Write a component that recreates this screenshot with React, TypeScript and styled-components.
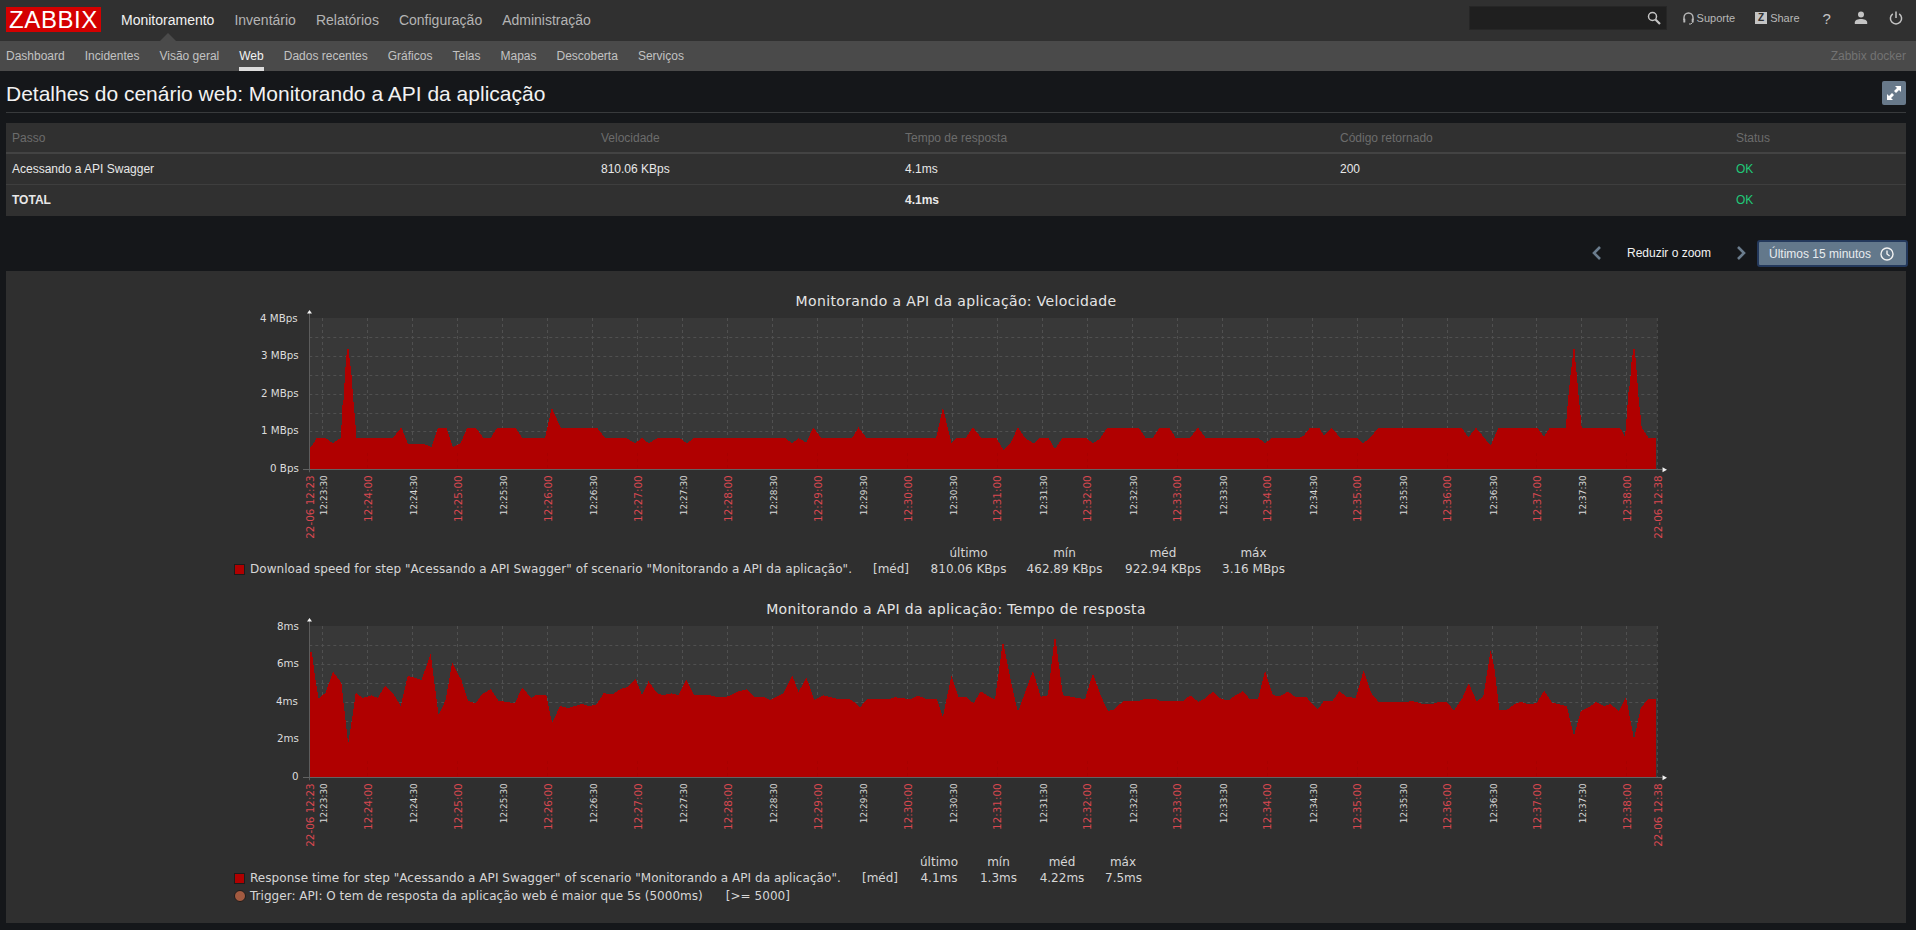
import React from "react";
import styled, { createGlobalStyle } from "styled-components";

const GlobalStyle = createGlobalStyle`
  * { box-sizing: border-box; }
  html, body { margin: 0; padding: 0; height: 100%; background: #15171a; overflow: hidden; }
  body { font-family: "Liberation Sans", Arial, sans-serif; font-size: 12px; color: #f2f2f2; }
`;

const Page = styled.div`
  width: 1916px;
  height: 930px;
`;

const TopBar = styled.header`
  height: 41px;
  background: #303030;
  display: flex;
  align-items: center;
  padding: 0 3px 0 6px;
`;

const Logo = styled.div`
  width: 95px;
  height: 25px;
  background: #d40000;
  color: #fff;
  font-size: 24px;
  line-height: 25px;
  letter-spacing: 0.6px;
  text-align: center;
  margin: 0 10px 2px 0;
`;

const MainNav = styled.nav`
  display: flex;
  flex: 1;
`;

const MainLink = styled.a<{ $active?: boolean }>`
  position: relative;
  padding: 0 10px;
  font-size: 14px;
  line-height: 41px;
  color: ${(p) => (p.$active ? "#f2f2f2" : "#b4b4b4")};
  ${(p) =>
    p.$active &&
    `&::after {
      content: "";
      position: absolute;
      left: 50%;
      bottom: 0;
      margin-left: -8px;
      border: 8px solid transparent;
      border-top: 0;
      border-bottom-color: #4a4a4a;
    }`}
`;

const Tools = styled.div`
  display: flex;
  align-items: center;
  height: 41px;
  padding-bottom: 5px;
`;

const SearchBox = styled.div`
  width: 198px;
  height: 24px;
  background: #1f1f1f;
  border: 1px solid #262626;
  margin-right: 16px;
  display: flex;
  align-items: center;
  justify-content: flex-end;
  padding-right: 5px;
  color: #c4c4c4;
`;

const ToolLink = styled.a<{ $after: number }>`
  display: flex;
  align-items: center;
  gap: 3px;
  font-size: 11px;
  color: #b8b8b8;
  margin-right: ${(p) => p.$after}px;
`;

const ZBadge = styled.span`
  width: 12px;
  height: 12px;
  background: #c4c4c4;
  color: #303030;
  font-size: 10px;
  font-weight: 700;
  line-height: 12px;
  text-align: center;
`;

const IconButton = styled.a`
  width: 34.5px;
  display: flex;
  justify-content: center;
  align-items: center;
  color: #c4c4c4;
  font-size: 15px;
`;

const SubBar = styled.nav`
  height: 30px;
  background: #4a4a4a;
  display: flex;
  padding: 0 10px 0 6px;
`;

const SubLink = styled.a<{ $active?: boolean }>`
  position: relative;
  margin-right: 20px;
  font-size: 12px;
  line-height: 30px;
  color: ${(p) => (p.$active ? "#f2f2f2" : "#c2c2c2")};
  ${(p) =>
    p.$active &&
    `&::after {
      content: "";
      position: absolute;
      left: 0;
      right: 0;
      bottom: 0;
      height: 4px;
      background: #dcdcdc;
    }`}
`;

const ServerName = styled.span`
  margin-left: auto;
  line-height: 30px;
  font-size: 12px;
  color: #737373;
`;

const Content = styled.main`
  padding: 0 10px 0 6px;
`;

const TitleRow = styled.div`
  height: 42px;
  display: flex;
  align-items: center;
  justify-content: space-between;
  border-bottom: 1px solid #383a3c;
  padding-top: 3px;
`;

const PageTitle = styled.h1`
  margin: 2px 0 0;
  font-size: 21px;
  font-weight: 400;
  line-height: 24px;
  color: #f2f2f2;
`;

const ExpandButton = styled.a`
  width: 24px;
  height: 24px;
  border-radius: 2px;
  background: #68798a;
  display: flex;
  align-items: center;
  justify-content: center;
`;

const Table = styled.section`
  margin-top: 10px;
  background: #303030;
`;

const TableRow = styled.div<{ $head?: boolean; $last?: boolean }>`
  display: grid;
  grid-template-columns: 589px 304px 435px 396px 176px;
  align-items: center;
  height: 31px;
  padding-bottom: ${(p) => (p.$last ? 2 : 0)}px;
  border-bottom: ${(p) => (p.$head ? "2px solid #434343" : p.$last ? "0" : "1px solid #3e3e3e")};
  color: ${(p) => (p.$head ? "#6c6c6c" : "#e8e8e8")};
  font-size: 12px;
`;

const Cell = styled.div<{ $ok?: boolean; $bold?: boolean }>`
  padding-left: 6px;
  color: ${(p) => (p.$ok ? "#20c978" : "inherit")};
  font-weight: ${(p) => (p.$bold ? 700 : 400)};
`;

const TimeBar = styled.div`
  height: 55px;
  padding-top: 24px;
  display: flex;
  align-items: flex-start;
  justify-content: flex-end;
  margin-right: -2px;
`;

const ZoomOut = styled.a`
  width: 84px;
  margin: 0 22px;
  line-height: 26px;
  color: #f2f2f2;
  white-space: nowrap;
`;

const Chevron = styled.a`
  height: 26px;
  width: 16px;
  display: flex;
  align-items: center;
  justify-content: center;
  color: #6b7d8e;
`;

const RangeButton = styled.a`
  width: 151px;
  height: 27px;
  margin-left: 8px;
  background: #63788b;
  border: 2px solid #24395c;
  border-radius: 3px;
  color: #e8ecef;
  display: flex;
  align-items: center;
  justify-content: space-between;
  padding: 0 12px 0 10px;
`;

const GraphPanel = styled.section`
  background: #2f2f2f;
  height: 652px;
  padding-top: 22px;
`;

const GraphTitle = styled.h2`
  margin: 0;
  height: 16px;
  line-height: 16px;
  font-family: "DejaVu Sans", sans-serif;
  font-size: 14px;
  font-weight: 400;
  letter-spacing: 0.36px;
  color: #e4e4e4;
  text-align: center;
`;

const PlotSvg = styled.svg`
  display: block;
`;

const AxisText = styled.text`
  font-family: "DejaVu Sans", sans-serif;
`;

const Legend = styled.div<{ $columns: string; $after: number }>`
  display: grid;
  grid-template-columns: ${(p) => p.$columns};
  margin: 0 0 ${(p) => p.$after}px 228px;
  font-family: "DejaVu Sans", sans-serif;
  font-size: 12px;
  line-height: 16px;
  color: #d6d6d6;
  white-space: nowrap;
`;

const StatHead = styled.span`
  text-align: center;
`;

const Spacer = styled.span`
  grid-column: span 3;
`;

const Stat = styled.span`
  text-align: center;
`;

const SeriesName = styled.span`
  letter-spacing: 0.055px;
`;

const Swatch = styled.span`
  align-self: center;
  width: 11px;
  height: 11px;
  background: #b00000;
  border: 1px solid #1c1c1c;
`;

const TriggerRow = styled.div`
  grid-column: 1 / -1;
  display: flex;
  align-items: center;
  height: 18px;
  padding-top: 1px;
  letter-spacing: 0.03px;
`;

const TriggerDot = styled.span`
  width: 12px;
  height: 12px;
  border-radius: 50%;
  background: #a25a40;
  border: 1px solid #1c1c1c;
  margin-right: 4px;
`;

const TriggerLimit = styled.span`
  margin-left: 23px;
`;

type P = [number, number];
const seg = (ox: number, sx: number, oy: number, pts: P[]): P[] =>
  pts.map(([x, y]) => [ox + x / sx, oy + y / 3] as P);

const speed: P[] = [
  ...seg(300, 2.8, 310, [
    [25, 478], [25, 415], [35, 405], [47, 384], [72, 384], [92, 400], [108, 388], [115, 384], [118, 290], [122, 270], [126, 190], [130, 140], [132, 118], [136, 118], [138, 140], [144, 190], [150, 280], [156, 350], [158, 384],
    [260, 384], [284, 352], [302, 402], [348, 402], [368, 412], [386, 353], [410, 353], [428, 412], [450, 400], [468, 353], [492, 353], [514, 384], [534, 384], [552, 353], [604, 353], [622, 384], [686, 384], [705, 293], [730, 353], [832, 353], [854, 384], [914, 384], [938, 400], [958, 384], [976, 400], [1002, 384], [1062, 384], [1084, 400], [1102, 384], [1358, 384], [1378, 400], [1396, 384], [1418, 398], [1437, 352], [1460, 384], [1546, 384], [1564, 352],
  ]),
  ...seg(860, 2.8, 310, [
    [0, 358], [18, 384], [213, 384], [232, 293], [256, 398], [272, 384], [296, 384], [316, 352], [340, 384], [382, 384], [402, 420], [422, 398], [442, 352], [462, 384], [486, 400], [504, 384], [528, 384], [546, 418], [566, 384], [634, 384], [652, 400], [670, 388], [692, 353], [780, 353], [800, 384], [820, 384], [838, 353], [866, 353], [884, 384], [924, 384], [946, 352], [968, 384], [1116, 384], [1134, 400], [1154, 384], [1232, 384],
  ]),
  ...seg(1300, 3, 280, [
    [0, 473], [12, 466], [30, 443], [58, 443], [72, 468], [95, 443], [120, 473], [170, 473], [190, 490], [212, 472], [235, 443], [485, 443], [505, 472], [528, 443], [572, 497], [595, 443], [712, 443], [732, 470], [750, 443], [797, 443], [800, 410], [805, 350], [812, 280], [817, 240], [820, 208], [824, 208], [826, 240], [830, 280], [836, 350], [842, 410], [845, 443], [960, 443], [975, 470], [980, 410], [985, 340], [990, 310], [995, 240], [1000, 208], [1004, 208], [1007, 240], [1012, 300], [1017, 370], [1022, 410], [1025, 443], [1045, 473], [1068, 473], [1068, 568],
  ]),
];

const response: P[] = [
  ...seg(300, 2.8, 620, [
    [25, 471], [25, 95], [33, 95], [42, 170], [52, 235], [72, 218], [92, 155], [116, 188], [122, 250], [135, 372], [150, 265], [156, 218], [176, 234], [200, 226], [218, 234], [238, 197], [262, 222], [282, 258], [302, 167], [340, 180], [350, 150], [366, 100], [374, 170], [388, 285], [408, 240], [426, 128], [452, 180], [470, 242], [492, 250], [510, 222], [534, 208], [556, 242], [602, 250], [622, 202], [648, 234], [660, 226], [690, 226], [706, 310], [728, 258], [750, 264], [790, 252], [810, 258], [830, 254], [850, 220], [876, 222], [900, 206], [916, 202], [940, 178], [958, 226], [976, 184], [1000, 220], [1016, 226], [1040, 220], [1060, 226], [1082, 178], [1104, 226], [1150, 226], [1170, 232], [1196, 230], [1228, 214], [1252, 208], [1274, 232], [1302, 232], [1316, 240], [1354, 220], [1378, 166], [1396, 216], [1418, 172], [1440, 240], [1464, 226], [1480, 230], [1510, 238], [1540, 238], [1556, 250],
  ]),
  ...seg(860, 2.8, 620, [
    [0, 262], [20, 238], [80, 238], [96, 232], [120, 234], [134, 238], [146, 236], [162, 226], [186, 238], [216, 238], [232, 292], [256, 166], [276, 232], [298, 232], [318, 250], [338, 214], [358, 228], [378, 238], [400, 64], [424, 190], [442, 276], [484, 152], [506, 230], [526, 226], [546, 44], [568, 226], [600, 232], [630, 238], [652, 160], [674, 226], [694, 274], [712, 268], [736, 244], [774, 244], [796, 238], [830, 238], [842, 244], [904, 244], [924, 226], [948, 246], [968, 234], [988, 214], [1012, 238], [1034, 240], [1050, 226], [1072, 214], [1092, 238], [1114, 238], [1134, 152], [1156, 226], [1178, 228], [1198, 214], [1220, 232], [1250, 232], [1282, 268], [1298, 244], [1322, 244], [1342, 214], [1362, 230], [1388, 234], [1410, 152], [1432, 220], [1452, 246], [1510, 246],
  ]),
  ...seg(1400, 3, 620, [
    [0, 246], [40, 244], [66, 251], [100, 251], [116, 246], [140, 245], [162, 272], [186, 236], [206, 190], [230, 244], [250, 230], [272, 90], [284, 150], [298, 270], [320, 270], [344, 252], [362, 246], [384, 252], [410, 250], [432, 212], [456, 248], [500, 258], [522, 348], [542, 274], [566, 262], [588, 246], [612, 258], [632, 252], [656, 274], [678, 232], [702, 358], [722, 264], [744, 238], [768, 238], [768, 471],
  ]),
];

const LEFT = 309.3;
const RIGHT = 1657.3;
const HEIGHT = 151.3;

const timeLabels = Array.from({ length: 30 }, (_, i) => {
  const seconds = 30 * (i + 1);
  const min = 23 + Math.floor(seconds / 60);
  const sec = seconds % 60;
  return { x: 322.3 + 44.97 * i, text: `12:${min}:${sec === 0 ? "00" : "30"}`, major: sec === 0 };
});

const RED = "#d9474f";

type PlotProps = {
  top: number;
  height: number;
  points: P[];
  yLabels: { text: string; y: number; x: number }[];
};

function Plot({ top, height, points, yLabels }: PlotProps) {
  const bottom = top + HEIGHT;
  const labelTop = bottom + 6;
  const poly = points.map(([x, y]) => `${x.toFixed(1)},${y.toFixed(1)}`).join(" ");
  return (
    <PlotSvg width={1900} height={height} viewBox={`6 ${top - 9} 1900 ${height}`}>
      <rect x={LEFT} y={top} width={RIGHT - LEFT} height={HEIGHT} fill="#383838" />
      {Array.from({ length: 7 }, (_, i) => {
        const y = Math.round(top + ((i + 1) * HEIGHT) / 8) + 0.5;
        return <line key={i} x1={LEFT} x2={RIGHT} y1={y} y2={y} stroke="#505050" strokeDasharray="3 3" />;
      })}
      {timeLabels.map((t) => (
        <line key={t.x} x1={Math.round(t.x) + 0.5} x2={Math.round(t.x) + 0.5} y1={top} y2={bottom} stroke="#505050" strokeDasharray="3 3" />
      ))}
      <line x1={RIGHT} x2={RIGHT} y1={top} y2={bottom} stroke="#505050" strokeDasharray="3 3" />
      <polygon points={poly} fill="#b00000" shapeRendering="crispEdges" />
      {timeLabels
        .filter((t) => t.major)
        .map((t) => (
          <line key={t.x} x1={Math.round(t.x) + 0.5} x2={Math.round(t.x) + 0.5} y1={top + 135} y2={bottom} stroke="#a80000" strokeDasharray="3 3" />
        ))}
      <line x1={309.5} x2={309.5} y1={top - 6} y2={bottom + 3} stroke="#5c5c5c" />
      <line x1={303} x2={1662} y1={Math.round(bottom) + 0.5} y2={Math.round(bottom) + 0.5} stroke="#626262" />
      <polygon points={`309.5,${top - 8} 312,${top - 4.5} 307,${top - 4.5}`} fill="#f2f2f2" />
      <polygon points={`1667,${bottom + 0.5} 1662.5,${bottom - 2} 1662.5,${bottom + 3}`} fill="#f2f2f2" />
      {yLabels.map((l) => (
        <AxisText key={l.text} x={l.x} y={l.y + 4} fontSize={10.3} fill="#dcdcdc">
          {l.text}
        </AxisText>
      ))}
      <AxisText transform={`translate(313.5 ${labelTop}) rotate(-90)`} textAnchor="end" fontSize={10.4} fill={RED}>
        22-06 12:23
      </AxisText>
      {timeLabels.map((t) =>
        t.major ? (
          <AxisText key={t.text} transform={`translate(${t.x + 4.6} ${labelTop}) rotate(-90)`} textAnchor="end" fontSize={10.4} fill={RED}>
            {t.text}
          </AxisText>
        ) : (
          <AxisText key={t.text} transform={`translate(${t.x + 5} ${labelTop}) rotate(-90)`} textAnchor="end" fontSize={8.9} fill="#d8d8d8">
            {t.text}
          </AxisText>
        )
      )}
      <AxisText transform={`translate(1661.5 ${labelTop}) rotate(-90)`} textAnchor="end" fontSize={10.4} fill={RED}>
        22-06 12:38
      </AxisText>
    </PlotSvg>
  );
}

const SearchIcon = () => (
  <svg width="14" height="14" viewBox="0 0 14 14" fill="none" stroke="currentColor" strokeWidth="1.5">
    <circle cx="5.5" cy="5.5" r="4" />
    <path d="M8.5 8.5 13 13" strokeWidth="2.2" />
  </svg>
);

const HeadsetIcon = () => (
  <svg width="11" height="13" viewBox="0 0 11 13" fill="none" stroke="currentColor" strokeWidth="1.4">
    <path d="M1 8V5.5a4.5 4.5 0 0 1 9 0V8" />
    <rect x="0.3" y="6.5" width="2" height="4" fill="currentColor" stroke="none" rx="0.6" />
    <rect x="8.7" y="6.5" width="2" height="4" fill="currentColor" stroke="none" rx="0.6" />
    <path d="M9.5 10.5 8 12H6" strokeWidth="1" />
  </svg>
);

const UserIcon = () => (
  <svg width="14" height="14" viewBox="0 0 14 14" fill="currentColor">
    <circle cx="7" cy="3.6" r="3" />
    <path d="M0.8 13v-1.6C0.8 9.2 4 8 7 8s6.2 1.2 6.2 3.4V13z" />
  </svg>
);

const PowerIcon = () => (
  <svg width="14" height="14" viewBox="0 0 14 14" fill="none" stroke="currentColor" strokeWidth="1.5">
    <path d="M7 0.6V7" />
    <path d="M3.8 2.8a5.6 5.6 0 1 0 6.4 0" />
  </svg>
);

const ExpandIcon = () => (
  <svg width="16" height="16" viewBox="0 0 16 16" fill="#fff">
    <path d="M9 1h6v6l-2-2-3 3-2-2 3-3z" />
    <path d="M7 15H1V9l2 2 3-3 2 2-3 3z" />
  </svg>
);

const ClockIcon = () => (
  <svg width="14" height="14" viewBox="0 0 14 14" fill="none" stroke="#f2f2f2" strokeWidth="1.4">
    <circle cx="7" cy="7" r="6" />
    <path d="M7 3.4V7l2.6 2" />
  </svg>
);

const ChevronIcon = ({ right }: { right?: boolean }) => (
  <svg width="10" height="14" viewBox="0 0 10 14" fill="none" stroke="currentColor" strokeWidth="2.6">
    <path d={right ? "M2 1l6 6-6 6" : "M8 1L2 7l6 6"} />
  </svg>
);

const mainItems = ["Inventário", "Relatórios", "Configuração", "Administração"];
const subItems = ["Dashboard", "Incidentes", "Visão geral", "Web", "Dados recentes", "Gráficos", "Telas", "Mapas", "Descoberta", "Serviços"];

export default function App() {
  return (
    <Page>
      <GlobalStyle />
      <TopBar>
        <Logo>ZABBIX</Logo>
        <MainNav>
          <MainLink $active>Monitoramento</MainLink>
          {mainItems.map((m) => (
            <MainLink key={m}>{m}</MainLink>
          ))}
        </MainNav>
        <Tools>
          <SearchBox>
            <SearchIcon />
          </SearchBox>
          <ToolLink $after={20}>
            <HeadsetIcon />
            Suporte
          </ToolLink>
          <ToolLink $after={10}>
            <ZBadge>Z</ZBadge>
            Share
          </ToolLink>
          <IconButton>?</IconButton>
          <IconButton>
            <UserIcon />
          </IconButton>
          <IconButton>
            <PowerIcon />
          </IconButton>
        </Tools>
      </TopBar>
      <SubBar>
        {subItems.map((s) => (
          <SubLink key={s} $active={s === "Web"}>
            {s}
          </SubLink>
        ))}
        <ServerName>Zabbix docker</ServerName>
      </SubBar>
      <Content>
        <TitleRow>
          <PageTitle>Detalhes do cenário web: Monitorando a API da aplicação</PageTitle>
          <ExpandButton>
            <ExpandIcon />
          </ExpandButton>
        </TitleRow>
        <Table>
          <TableRow $head>
            <Cell>Passo</Cell>
            <Cell>Velocidade</Cell>
            <Cell>Tempo de resposta</Cell>
            <Cell>Código retornado</Cell>
            <Cell>Status</Cell>
          </TableRow>
          <TableRow>
            <Cell>Acessando a API Swagger</Cell>
            <Cell>810.06 KBps</Cell>
            <Cell>4.1ms</Cell>
            <Cell>200</Cell>
            <Cell $ok>OK</Cell>
          </TableRow>
          <TableRow $last>
            <Cell $bold>TOTAL</Cell>
            <Cell />
            <Cell $bold>4.1ms</Cell>
            <Cell />
            <Cell $ok>OK</Cell>
          </TableRow>
        </Table>
        <TimeBar>
          <Chevron>
            <ChevronIcon />
          </Chevron>
          <ZoomOut>Reduzir o zoom</ZoomOut>
          <Chevron>
            <ChevronIcon right />
          </Chevron>
          <RangeButton>
            Últimos 15 minutos
            <ClockIcon />
          </RangeButton>
        </TimeBar>
        <GraphPanel>
          <GraphTitle>Monitorando a API da aplicação: Velocidade</GraphTitle>
          <Plot
            top={318}
            height={236}
            points={speed}
            yLabels={[
              { text: "4 MBps", x: 260, y: 318 },
              { text: "3 MBps", x: 261, y: 355 },
              { text: "2 MBps", x: 261, y: 393 },
              { text: "1 MBps", x: 261, y: 430 },
              { text: "0 Bps", x: 270, y: 468 },
            ]}
          />
          <Legend $columns="16px 623px 57px 77px 19px 77px 22px 76px 21px 63px" $after={24}>
            <Spacer />
            <StatHead>último</StatHead>
            <span />
            <StatHead>mín</StatHead>
            <span />
            <StatHead>méd</StatHead>
            <span />
            <StatHead>máx</StatHead>
            <Swatch />
            <SeriesName>Download speed for step "Acessando a API Swagger" of scenario "Monitorando a API da aplicação".</SeriesName>
            <span>[méd]</span>
            <Stat>810.06 KBps</Stat>
            <span />
            <Stat>462.89 KBps</Stat>
            <span />
            <Stat>922.94 KBps</Stat>
            <span />
            <Stat>3.16 MBps</Stat>
          </Legend>
          <GraphTitle>Monitorando a API da aplicação: Tempo de resposta</GraphTitle>
          <Plot
            top={626}
            height={237}
            points={response}
            yLabels={[
              { text: "8ms", x: 277, y: 626 },
              { text: "6ms", x: 277, y: 663 },
              { text: "4ms", x: 276, y: 701 },
              { text: "2ms", x: 277, y: 738 },
              { text: "0", x: 292, y: 776 },
            ]}
          />
          <Legend $columns="16px 612px 58px 38px 21px 39px 19px 50px 18px 36px" $after={0}>
            <Spacer />
            <StatHead>último</StatHead>
            <span />
            <StatHead>mín</StatHead>
            <span />
            <StatHead>méd</StatHead>
            <span />
            <StatHead>máx</StatHead>
            <Swatch />
            <SeriesName>Response time for step "Acessando a API Swagger" of scenario "Monitorando a API da aplicação".</SeriesName>
            <span>[méd]</span>
            <Stat>4.1ms</Stat>
            <span />
            <Stat>1.3ms</Stat>
            <span />
            <Stat>4.22ms</Stat>
            <span />
            <Stat>7.5ms</Stat>
            <TriggerRow>
              <TriggerDot />
              Trigger: API: O tem de resposta da aplicação web é maior que 5s (5000ms)
              <TriggerLimit>[&gt;= 5000]</TriggerLimit>
            </TriggerRow>
          </Legend>
        </GraphPanel>
      </Content>
    </Page>
  );
}
